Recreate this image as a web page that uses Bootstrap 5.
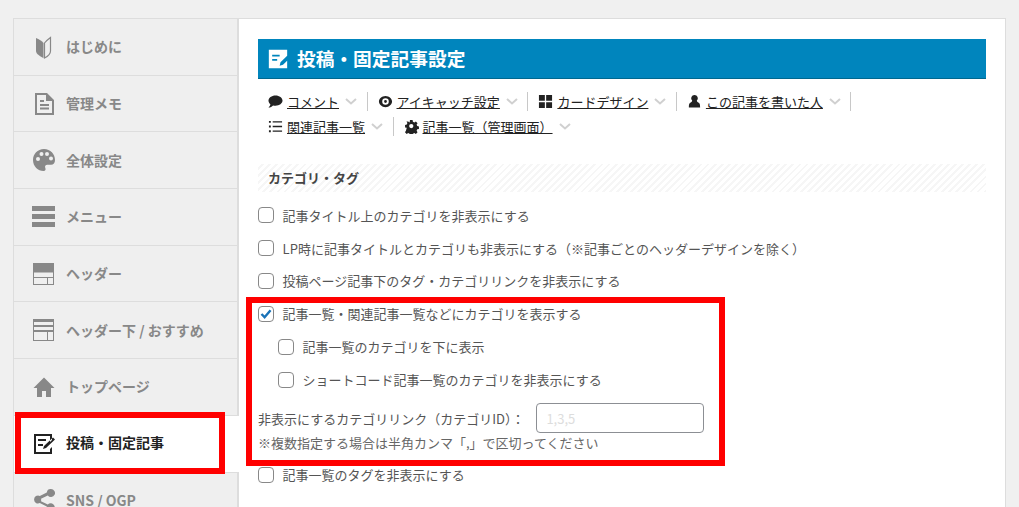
<!DOCTYPE html>
<html lang="ja">
<head>
<meta charset="utf-8">
<title>投稿・固定記事設定</title>
<link href="https://cdn.jsdelivr.net/npm/bootstrap@5.3.0/dist/css/bootstrap.min.css" rel="stylesheet">
<style>
html,body{height:507px;overflow:hidden}
body{background:#f0f0f0;font-family:"Noto Sans CJK JP","Liberation Sans",sans-serif;font-size:13px;color:#444;padding:18px 13px 0;position:relative}
.shell{background:#fff;border:1px solid #ddd;border-bottom:0;height:600px}
.side{width:225px;flex:none;background:#efefef;border-right:2px solid #ddd}
.side-item{height:56.7px;border-bottom:1px solid #ddd;color:#888;font-weight:700;font-size:14px;padding-left:18px;gap:10px}
.side-item svg{width:24px;height:24px;flex:none;fill:#888}
.side-item.on{background:#fff;color:#222;margin-right:-2px;position:relative}
.side-item.on svg{fill:#222}
.side-item.on span{position:relative;top:-1px}
.body-pane{padding:20px 19px 0 19px;min-width:0}
.page-head{background:#0085bd;border-bottom:1px solid #00688f;color:#fff;font-size:18.72px;font-weight:700;height:40px;padding-left:10px;gap:9px;margin:0}
.page-head svg{width:20px;height:20px;fill:#fff;flex:none}
.tabs{padding:10px 0 0 10px;line-height:25px}
.tab{height:25px;color:#222}
.tab svg.ic{width:15px;height:15px;fill:#222;margin-right:4px;flex:none}
.tab a{color:#222;text-decoration:underline}
.tab svg.chev{width:12px;height:7px;margin:0 9.500px 0 6px;fill:none;stroke:#d0d0d0;stroke-width:2}
.tab-sep{border-left:1px solid #c8c8c8;height:19px;margin-right:10px}
.sec-title{height:28px;margin:25px 0 0;padding-left:10px;font-size:13px;font-weight:700;color:#444;background:repeating-linear-gradient(-45deg,#f6f6f6 0 2px,#fff 2px 5px)}
.opts{margin-top:7px;color:#555}
.opt{height:32.9px;margin:0;gap:8.600px}
.opt.sub{padding-left:20px}
.opt .form-check-input{width:16px;height:16px;margin:0;border-color:#888;border-radius:4px;flex:none;float:none}
.opt .form-check-input:checked{background-color:#fff;border-color:#888;background-image:url("data:image/svg+xml,%3csvg xmlns='http://www.w3.org/2000/svg' viewBox='0 0 20 20'%3e%3cpath fill='none' stroke='%231a73b8' stroke-width='3.4' d='m3.500 10 4.500 4.500 8.500-10'/%3e%3c/svg%3e")}
.idrow{height:30px;margin-top:7px}
.idrow input{width:168px;height:30px;border:1px solid #8c8f94;border-radius:4px;padding:0 9px;font-size:13px;margin-left:12px;color:#444}
.idrow input::placeholder{color:#ddd}
.note{color:#666;height:20px;line-height:20px}
.opt.after-note{margin-top:5px}
.mark-box{position:absolute;border:6px solid #f00;pointer-events:none}
.mark-a{left:15px;top:412px;width:210px;height:62px}
.mark-b{left:246px;top:297px;width:479px;height:169px}
</style>
</head>
<body>
<div class="shell d-flex">
  <nav class="side">
    <div class="side-item d-flex align-items-center"><svg viewBox="0 0 24 24"><path d="M4 3c3 1 6 3 7.500 5v15c-3-1.500-7.500-4-7.500-7z"/><path fill="none" stroke="#888" stroke-width="1.200" d="M18.500 2.500v13.500c0 3-3 5.500-6 7V8c1.500-2 4-4 6-5.500z"/></svg><span>はじめに</span></div>
    <div class="side-item d-flex align-items-center"><svg viewBox="0 0 24 24"><path fill-rule="evenodd" d="M3 1h12l7 7v15H3zm2 2v18h15V9h-6V3zm3 9h9v2H8zm0 3.500h9v2H8zM8 8h4v2H8z"/></svg><span>管理メモ</span></div>
    <div class="side-item d-flex align-items-center"><svg viewBox="0 0 24 24"><path fill-rule="evenodd" d="M12 1C5.500 1 1 6 1 12c0 6.500 5 11 10.500 11 2 0 2.500-1.500 1.800-3-.8-1.700.2-3.200 2-3.200H19c2.500 0 4-1.800 4-4.800C23 6 18.500 1 12 1zM6 13a2 2 0 1 1 0-4 2 2 0 0 1 0 4zm3.500-5a2 2 0 1 1 0-4 2 2 0 0 1 0 4zm5.500 0a2 2 0 1 1 0-4 2 2 0 0 1 0 4zm4 4.500a2 2 0 1 1 0-4 2 2 0 0 1 0 4z"/></svg><span>全体設定</span></div>
    <div class="side-item d-flex align-items-center"><svg viewBox="0 0 24 24"><path d="M0 1h23v5H0zM0 9h23v5H0zM0 17h23v5H0z"/></svg><span>メニュー</span></div>
    <div class="side-item d-flex align-items-center"><svg viewBox="0 0 24 24"><path fill-rule="evenodd" d="M1 1h21v22H1zm1 9.500V15h19v-4.500zM2 16v6h13v-6zm14 0v6h5v-6z"/></svg><span>ヘッダー</span></div>
    <div class="side-item d-flex align-items-center"><svg viewBox="0 0 24 24"><path fill-rule="evenodd" d="M1 1h21v22H1zm1 3v3h19V4zm0 5v3h19V9zm0 5v8h13v-8zm14 0v8h5v-8z"/></svg><span>ヘッダー下 / おすすめ</span></div>
    <div class="side-item d-flex align-items-center"><svg viewBox="0 0 24 24"><path d="M12 2.500 1.500 13H5v9h5v-6h4v6h5v-9h3.500z"/></svg><span>トップページ</span></div>
    <div class="side-item on d-flex align-items-center"><svg viewBox="0 0 24 24"><path fill-rule="evenodd" d="M2 2h18v6l-2 2V4H4v16h14v-3l2-2v7H2zm4 5h8v2H6zm0 5h5v2H6zm5 5 1-3 9-8.500 2 2L14 16z"/></svg><span>投稿・固定記事</span></div>
    <div class="side-item d-flex align-items-center"><svg viewBox="0 0 24 24"><path d="M19 1a4 4 0 1 1-3.200 6.400L9 10.800a4 4 0 0 1 0 2.400l6.800 3.400a4 4 0 1 1-1 2l-7-3.500a4 4 0 1 1 0-7.200l7-3.500A4 4 0 0 1 19 1z"/></svg><span>SNS / OGP</span></div>
  </nav>
  <main class="body-pane flex-grow-1">
    <h1 class="page-head d-flex align-items-center"><svg viewBox="0 0 24 24"><path fill-rule="evenodd" d="M1 1h22v7l-8 8-1 4 4-1 5-5v9H1zm4 6v2h9V7zm0 5v2h6v-2z"/></svg><span>投稿・固定記事設定</span></h1>
    <div class="tabs d-flex flex-wrap">
      <div class="tab d-flex align-items-center"><svg class="ic" viewBox="0 0 16 16"><path d="M8 1.500c4.200 0 7.500 2.500 7.500 5.500S12.200 12.500 8 12.500c-1 0-1.800-.1-2.600-.3C4.300 13.500 2.500 14.500.5 14.500c1.200-1 1.900-2.200 2-3.500C1.300 10 .5 8.600.5 7c0-3 3.300-5.500 7.500-5.500z"/></svg><a href="#">コメント</a><svg class="chev" viewBox="0 0 12 7"><path d="m1 1 5 4.500L11 1"/></svg><span class="tab-sep"></span></div>
      <div class="tab d-flex align-items-center"><svg class="ic" viewBox="0 0 16 16"><path fill-rule="evenodd" d="M8 2c4 0 7 3 7 6s-3 6-7 6-7-3-7-6 3-6 7-6zm0 2.500a3.500 3.500 0 1 0 0 7 3.500 3.500 0 0 0 0-7zm0 2a1.500 1.500 0 1 1 0 3 1.500 1.500 0 0 1 0-3z"/></svg><a href="#">アイキャッチ設定</a><svg class="chev" viewBox="0 0 12 7"><path d="m1 1 5 4.500L11 1"/></svg><span class="tab-sep"></span></div>
      <div class="tab d-flex align-items-center"><svg class="ic" viewBox="0 0 16 16"><path d="M1 1h6.300v6.300H1zM8.700 1H15v6.300H8.700zM1 8.700h6.300V15H1zM8.700 8.700H15V15H8.700z"/></svg><a href="#">カードデザイン</a><svg class="chev" viewBox="0 0 12 7"><path d="m1 1 5 4.500L11 1"/></svg><span class="tab-sep"></span></div>
      <div class="tab d-flex align-items-center"><svg class="ic" viewBox="0 0 16 16"><path d="M8 1a3.500 3.500 0 0 1 2.500 6c0 1 .3 1.500 1.500 2 1.500.6 2 1.500 2 5.500H2c0-4 .5-4.900 2-5.500 1.200-.5 1.500-1 1.500-2A3.500 3.500 0 0 1 8 1z"/></svg><a href="#">この記事を書いた人</a><svg class="chev" viewBox="0 0 12 7"><path d="m1 1 5 4.500L11 1"/></svg><span class="tab-sep"></span></div>
      <div class="tab d-flex align-items-center"><svg class="ic" viewBox="0 0 16 16"><path d="M1 2h2v2H1zM5 2.300h10v1.400H5zM1 7h2v2H1zM5 7.300h10v1.400H5zM1 12h2v2H1zM5 12.300h10v1.400H5z"/></svg><a href="#">関連記事一覧</a><svg class="chev" viewBox="0 0 12 7"><path d="m1 1 5 4.500L11 1"/></svg><span class="tab-sep"></span></div>
      <div class="tab d-flex align-items-center"><svg class="ic" viewBox="0 0 16 16"><path fill-rule="evenodd" d="M6.500 1h3l.4 2 1.700.7 1.700-1.100 2 2-1.100 1.700.7 1.700 2 .4v3l-2 .4-.7 1.700 1.100 1.700-2 2-1.700-1.100-1.700.7-.4 2h-3l-.4-2-1.700-.7-1.700 1.100-2-2 1.100-1.700L2.800 10l-2-.4v-3l2-.4.7-1.700L2.400 2.800l2-.2 1.700 1.100zM8 5.500a2.500 2.500 0 1 0 0 5 2.500 2.500 0 0 0 0-5z" transform="translate(.4 .2) scale(.92)"/></svg><a href="#">記事一覧（管理画面）</a><svg class="chev" viewBox="0 0 12 7"><path d="m1 1 5 4.500L11 1"/></svg></div>
    </div>
    <h2 class="sec-title d-flex align-items-center">カテゴリ・タグ</h2>
    <div class="opts">
      <label class="opt d-flex align-items-center"><input class="form-check-input" type="checkbox"><span>記事タイトル上のカテゴリを非表示にする</span></label>
      <label class="opt d-flex align-items-center"><input class="form-check-input" type="checkbox"><span>LP時に記事タイトルとカテゴリも非表示にする（※記事ごとのヘッダーデザインを除く）</span></label>
      <label class="opt d-flex align-items-center"><input class="form-check-input" type="checkbox"><span>投稿ページ記事下のタグ・カテゴリリンクを非表示にする</span></label>
      <label class="opt d-flex align-items-center"><input class="form-check-input" type="checkbox" checked><span>記事一覧・関連記事一覧などにカテゴリを表示する</span></label>
      <label class="opt sub d-flex align-items-center"><input class="form-check-input" type="checkbox"><span>記事一覧のカテゴリを下に表示</span></label>
      <label class="opt sub d-flex align-items-center"><input class="form-check-input" type="checkbox"><span>ショートコード記事一覧のカテゴリを非表示にする</span></label>
      <div class="idrow d-flex align-items-center"><span>非表示にするカテゴリリンク（カテゴリID）：</span><input type="text" placeholder="1,3,5"></div>
      <div class="note">※複数指定する場合は半角カンマ「,」で区切ってください</div>
      <label class="opt after-note d-flex align-items-center"><input class="form-check-input" type="checkbox"><span>記事一覧のタグを非表示にする</span></label>
    </div>
  </main>
</div>
<div class="mark-box mark-a"></div>
<div class="mark-box mark-b"></div>
<script src="https://cdn.jsdelivr.net/npm/bootstrap@5.3.0/dist/js/bootstrap.bundle.min.js"></script>
</body>
</html>
